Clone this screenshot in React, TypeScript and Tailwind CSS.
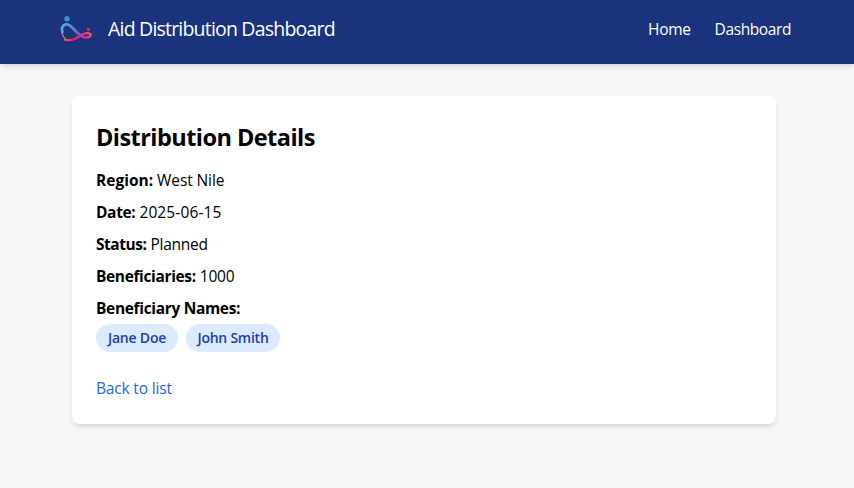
const details = [
  { label: "Region:", value: "West Nile", labelStyle: "", valueStyle: "tracking-[-0.1px]" },
  { label: "Date:", value: "2025-06-15", labelStyle: "tracking-[-0.35px]", valueStyle: "tracking-[0.12px]" },
  { label: "Status:", value: "Planned", labelStyle: "tracking-[-0.47px]", valueStyle: "tracking-[-0.25px]" },
  { label: "Beneficiaries:", value: "1000", labelStyle: "tracking-[-0.36px]", valueStyle: "tracking-[-0.2px]" },
];

function Logo() {
  return (
    <svg width="32" height="28" viewBox="0 0 32 28" fill="none" aria-hidden="true">
      <defs>
        <linearGradient id="blueArc" x1="2" y1="14" x2="22" y2="21" gradientUnits="userSpaceOnUse">
          <stop offset="0" stopColor="#42b2e4" />
          <stop offset="0.5" stopColor="#5b86d8" />
          <stop offset="1" stopColor="#8545b5" />
        </linearGradient>
        <linearGradient id="leftSide" x1="2" y1="13" x2="6" y2="24" gradientUnits="userSpaceOnUse">
          <stop offset="0" stopColor="#42b2e4" />
          <stop offset="0.5" stopColor="#9a76b8" />
          <stop offset="1" stopColor="#f2645c" />
        </linearGradient>
        <linearGradient id="pinkLoop" x1="4" y1="24" x2="31" y2="18" gradientUnits="userSpaceOnUse">
          <stop offset="0" stopColor="#f0705a" />
          <stop offset="0.3" stopColor="#ec1b68" />
          <stop offset="0.8" stopColor="#dc3590" />
          <stop offset="1" stopColor="#f5713c" />
        </linearGradient>
      </defs>
      <circle cx="7" cy="3.7" r="2.7" fill="#378fd0" />
      <circle cx="28.3" cy="14.5" r="1.7" fill="#e5283f" />
      <path d="M2.800 18C.5 12.500 3.200 9.200 7 9.300c5 .2 7.800 8.500 15.500 12.200" stroke="url(#blueArc)" strokeWidth="2.700" />
      <path d="M1.900 15c-.1 3.500 1 6.500 3.300 8.500" stroke="url(#leftSide)" strokeWidth="1.500" />
      <path d="M4.300 24.200C12 27.500 18 21.800 23 19.200c4.200-2 8.200-1 7.500 1.300-.7 2.200-4.300 2.700-8.500.9" stroke="url(#pinkLoop)" strokeWidth="2.200" />
    </svg>
  );
}

export default function App() {
  return (
    <div className="min-h-screen bg-[#f8f8f8] text-[15.5px] leading-6 text-black [font-family:'Open_Sans','Noto_Sans',sans-serif]">
      <header className="h-16 bg-[#1a337c] text-white shadow-md">
        <div className="flex h-[58px] items-center justify-between pl-[60px] pr-[63px]">
          <div className="flex items-center gap-4">
            <Logo />
            <span className="text-[19.5px] leading-7 tracking-[-0.8px] whitespace-nowrap">Aid Distribution Dashboard</span>
          </div>
          <nav className="flex gap-6">
            <a href="#home" className="tracking-[-0.3px]">Home</a>
            <a href="#dashboard" className="tracking-[-0.4px]">Dashboard</a>
          </nav>
        </div>
      </header>
      <main className="mx-[72px] mt-8 w-[704px] rounded-lg bg-white p-6 shadow-md">
        <h1 className="mb-[15px] pt-px text-[23.5px] leading-8 font-bold tracking-[-0.55px]">Distribution Details</h1>
        {details.map((d) => (
          <p key={d.label} className="mb-2 flex gap-1">
            <strong className={d.labelStyle}>{d.label}</strong>
            <span className={d.valueStyle}>{d.value}</span>
          </p>
        ))}
        <div>
          <strong className="block tracking-[-0.33px]">Beneficiary Names:</strong>
          <div className="mt-1 flex gap-2">
            <span className="w-[82px] rounded-full bg-[#dbeafe] py-1 text-center text-sm font-semibold tracking-[-0.2px] text-[#1e40af]">Jane Doe</span>
            <span className="w-[94px] rounded-full bg-[#dbeafe] py-1 text-center text-sm font-semibold tracking-[-0.25px] text-[#1e40af]">John Smith</span>
          </div>
        </div>
        <a href="#list" className="mt-6 block w-fit tracking-[-0.17px] text-[#2563eb]">Back to list</a>
      </main>
    </div>
  );
}
